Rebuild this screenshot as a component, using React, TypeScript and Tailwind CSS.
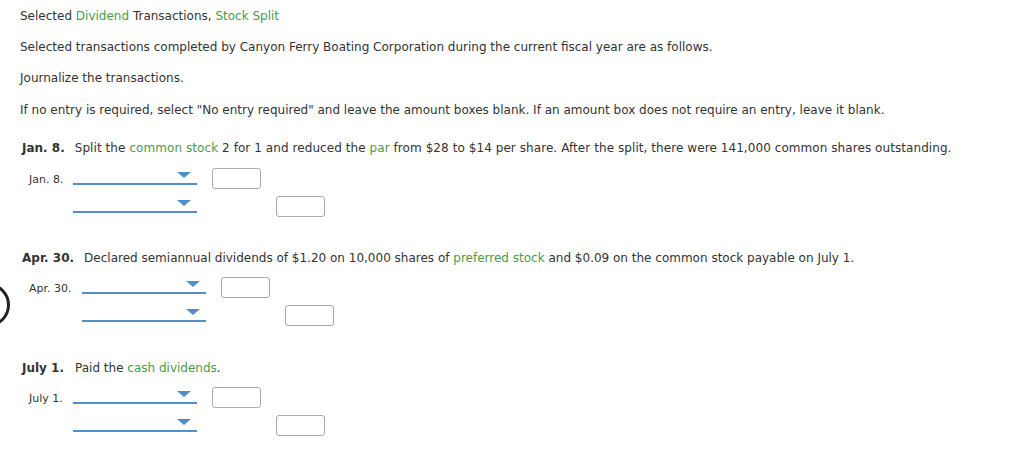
import React from 'react';

const green = 'text-[#4b9a4b]';

function Dropdown() {
  return (
    <div className="relative w-[124px] h-[17px] border-b-2 border-[#4f8fca]">
      <svg className="absolute right-[6px] top-[4px]" width="14" height="6" viewBox="0 0 14 6">
        <polygon points="0,0 14,0 7,6" fill="#4f8fca" />
      </svg>
    </div>
  );
}

function Amount() {
  return <div className="w-[49px] h-[21px] rounded-[3px] border border-[#a9a9a9] bg-white" />;
}

function Entry({ date, offset }: { date: string; offset: string }) {
  return (
    <div className={`grid w-fit grid-cols-[auto_124px_64px_79px] gap-y-[7px] items-start ${offset}`}>
      <div className="pl-[7px] pr-[10px] pt-[2px] text-[11px] leading-[19px]">{date}</div>
      <Dropdown />
      <div className="ml-[15px]"><Amount /></div>
      <div />
      <div />
      <Dropdown />
      <div />
      <div className="ml-[15px]"><Amount /></div>
    </div>
  );
}

export default function App() {
  return (
    <div
      className="relative min-h-[462px] w-[1024px] overflow-hidden bg-white pl-[20px] pt-[8px] text-[12px] leading-[16px] text-[#333333]"
      style={{ fontFamily: '"DejaVu Sans", Verdana, sans-serif' }}
    >
      <p>
        Selected <span className={green}>Dividend</span> Transactions, <span className={green}>Stock Split</span>
      </p>
      <p className="mt-[15px]">
        Selected transactions completed by Canyon Ferry Boating Corporation during the current fiscal year are as follows.
      </p>
      <p className="mt-[15px]">Journalize the transactions.</p>
      <p className="mt-[16px]">
        If no entry is required, select "No entry required" and leave the amount boxes blank. If an amount box does not require an entry, leave it blank.
      </p>

      {/* Jan. 8 */}
      <div className="mt-[22px] pl-[2px]">
        <p>
          <span className="mr-[10px] font-bold">Jan. 8.</span>
          <span className="tracking-[0.07px]">
            Split the <span className={green}>common stock</span> 2 for 1 and reduced the <span className={green}>par</span> from $28 to $14 per share. After the split, there were 141,000 common shares outstanding.
          </span>
        </p>
        <Entry date="Jan. 8." offset="mt-[12px]" />
      </div>

      {/* Apr. 30 */}
      <div className="mt-[33px] pl-[2px]">
        <p>
          <span className="mr-[10px] font-bold">Apr. 30.</span>
          Declared semiannual dividends of $1.20 on 10,000 shares of <span className={green}>preferred stock</span> and $0.09 on the common stock payable on July 1.
        </p>
        <Entry date="Apr. 30." offset="mt-[11px]" />
      </div>

      {/* July 1 */}
      <div className="mt-[34px] pl-[2px]">
        <p>
          <span className="mr-[11px] font-bold">July 1.</span>
          Paid the <span className={green}>cash dividends</span>.
        </p>
        <Entry date="July 1." offset="mt-[11px]" />
      </div>

      <div className="absolute left-[-34px] top-[283px] h-[44px] w-[44px] rounded-full border-[3px] border-[#222222]" />
    </div>
  );
}
